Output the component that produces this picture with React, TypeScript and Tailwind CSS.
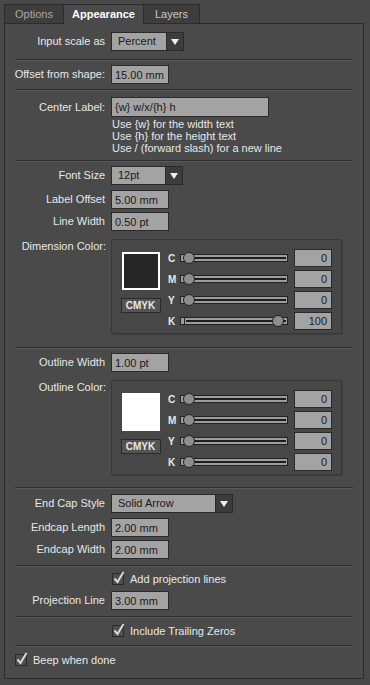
import React from "react";

const font = { fontFamily: '"Liberation Sans", Arial, sans-serif' };

function Sep({ mt }: { mt: string }) {
  return <div className={`${mt} mx-[10px] h-[2px] border-t border-[#2f2f2f] border-b border-b-[#5a5a5a]`} />;
}

function Label({ children }: { children: React.ReactNode }) {
  return (
    <div className="w-[101px] shrink-0 whitespace-nowrap pr-[1px] text-right text-[11px] leading-[13px] text-[#e8e8e8]">
      {children}
    </div>
  );
}

function Field({ value, w = "w-[58px]" }: { value: string; w?: string }) {
  return (
    <div className={`${w} h-[19px] whitespace-nowrap border border-[#2a2a2a] bg-[#a3a3a3] px-[3px] text-[11px] leading-[18px] text-[#1a1a1a]`}>
      {value}
    </div>
  );
}

function Select({ value, w }: { value: string; w: string }) {
  return (
    <div className={`${w} flex h-[19px] border border-[#2a2a2a]`}>
      <div className="flex-1 bg-[#a3a3a3] px-[6px] text-[11px] leading-[17px] text-[#1a1a1a]">{value}</div>
      <div className="flex w-[17px] items-center justify-center border-l border-[#2a2a2a] bg-[#3c3c3c]">
        <svg width="8" height="6" viewBox="0 0 8 6">
          <path d="M0 0 H8 L4 6 Z" fill="#f0f0f0" />
        </svg>
      </div>
    </div>
  );
}

function Row({ mt, label, children }: { mt: string; label: string; children: React.ReactNode }) {
  return (
    <div className={`${mt} flex items-center gap-[5px]`}>
      <Label>{label}</Label>
      {children}
    </div>
  );
}

function Slider({ pos }: { pos: number }) {
  return (
    <div className="relative h-[12px] w-[108px]">
      <div className="absolute left-0 top-[2px] h-[8px] w-[5px] border border-[#222] bg-[#9d9d9d]" />
      <div className="absolute left-[4px] right-0 top-[2px] flex h-[8px] items-center border border-[#222] bg-[#9d9d9d] px-[1px]">
        <div className="h-[2px] w-full bg-[#1e1e1e]" />
      </div>
      <div
        className="absolute top-[0px] h-[12px] w-[12px] rounded-full border border-[#222] bg-[#8e8e8e]"
        style={{ left: `${pos}px` }}
      />
    </div>
  );
}

function ColorBox({ dark, k }: { dark: boolean; k: number }) {
  const rows: [string, number][] = [
    ["C", 0],
    ["M", 0],
    ["Y", 0],
    ["K", k],
  ];
  return (
    <div className="mt-[8px] flex">
      <div className="w-[106px] shrink-0 pr-[5px] text-right">
        <div className="mt-[1px] text-[11px] leading-[13px] text-[#e8e8e8]">{dark ? "Dimension Color:" : "Outline Color:"}</div>
      </div>
      <div className="flex h-[95px] w-[231px] rounded-[2px] border border-[#383838] bg-[#474747] shadow-[1px_1px_0_#3e3e3e]">
        <div className="flex w-[56px] flex-col items-center pl-[1px] pt-[12px]">
          <div
            className={`h-[38px] w-[38px] ${dark ? "border-[2px] border-white bg-[#262626]" : "bg-white"}`}
          />
          <div className="mt-[8px] h-[15px] w-[40px] border border-[#2a2a2a] bg-[#545454] text-center text-[10px] font-bold leading-[13px] text-[#e8e8e8]">
            CMYK
          </div>
        </div>
        <div className="flex flex-col gap-[3px] pt-[9px]">
          {rows.map(([l, v]) => (
            <div key={l} className="flex h-[18px] items-center">
              <div className="w-[12px] text-[10px] font-bold text-[#e8e8e8]">{l}</div>
              <Slider pos={v === 100 ? 92 : 3} />
              <div className="ml-[6px] h-[18px] w-[38px] border border-[#2a2a2a] bg-[#a3a3a3] pr-[4px] text-right text-[11px] leading-[17px] text-[#1a1a1a]">
                {v}
              </div>
            </div>
          ))}
        </div>
      </div>
    </div>
  );
}

function Check({ label, mt, pl }: { label: string; mt: string; pl: string }) {
  return (
    <div className={`${mt} ${pl} flex h-[14px] items-center gap-[6px]`}>
      <div className="relative h-[12px] w-[12px] border border-[#2a2a2a] bg-[#4e4e4e]">
        <svg className="absolute left-[0px] top-[-3px]" width="12" height="13" viewBox="0 0 12 13">
          <path d="M1.5 7.5 L4.5 11 L10.5 1" stroke="#d8d8d8" strokeWidth="2" fill="none" />
        </svg>
      </div>
      <span className="text-[11px] leading-[13px] text-[#e8e8e8]">{label}</span>
    </div>
  );
}

export default function App() {
  return (
    <div style={font} className="h-[685px] w-[370px] bg-[#484848] px-[4px] pt-[4px]">
      <div className="flex h-[19px] text-[11px]">
        <div className="w-[60px] border border-b-0 border-[#2c2c2c] bg-[#3d3d3d] text-center leading-[18px] text-[#a8a8a8]">
          Options
        </div>
        <div className="relative z-10 h-[20px] w-[80px] border-t border-r border-[#2c2c2c] bg-[#4a4a4a] text-center font-bold leading-[18px] text-white">
          Appearance
        </div>
        <div className="w-[56px] border-t border-r border-[#2c2c2c] bg-[#3d3d3d] text-center leading-[18px] text-[#c8c8c8]">
          Layers
        </div>
      </div>
      <div className="h-[656px] w-[360px] border border-[#2c2c2c] bg-[#4a4a4a]">
        <Row mt="mt-[8px]" label="Input scale as">
          <Select value="Percent" w="w-[73px]" />
        </Row>
        <Sep mt="mt-[8px]" />
        <Row mt="mt-[4px]" label="Offset from shape:">
          <Field value="15.00 mm" />
        </Row>
        <Sep mt="mt-[5px]" />
        <Row mt="mt-[6px]" label="Center Label:">
          <Field value="{w} w/x/{h} h" w="w-[158px] h-[20px]" />
        </Row>
        <div className="mt-[1px] pl-[107px] text-[11px] leading-[12px] text-[#e8e8e8]">
          <div>Use {"{w}"} for the width text</div>
          <div>Use {"{h}"} for the height text</div>
          <div>Use / (forward slash) for a new line</div>
        </div>
        <Sep mt="mt-[6px]" />
        <Row mt="mt-[4px]" label="Font Size">
          <Select value="12pt" w="w-[72px]" />
        </Row>
        <Row mt="mt-[5px]" label="Label Offset">
          <Field value="5.00 mm" />
        </Row>
        <Row mt="mt-[3px]" label="Line Width">
          <Field value="0.50 pt" />
        </Row>
        <ColorBox dark k={100} />
        <Sep mt="mt-[13px]" />
        <Row mt="mt-[4px]" label="Outline Width">
          <Field value="1.00 pt" />
        </Row>
        <ColorBox dark={false} k={0} />
        <Sep mt="mt-[12px]" />
        <Row mt="mt-[5px]" label="End Cap Style">
          <Select value="Solid Arrow" w="w-[122px]" />
        </Row>
        <Row mt="mt-[5px]" label="Endcap Length">
          <Field value="2.00 mm" />
        </Row>
        <Row mt="mt-[3px]" label="Endcap Width">
          <Field value="2.00 mm" />
        </Row>
        <Sep mt="mt-[6px]" />
        <Check mt="mt-[5px]" pl="pl-[107px]" label="Add projection lines" />
        <Row mt="mt-[5px]" label="Projection Line">
          <Field value="3.00 mm" />
        </Row>
        <Sep mt="mt-[6px]" />
        <Check mt="mt-[6px]" pl="pl-[107px]" label="Include Trailing Zeros" />
        <Sep mt="mt-[7px]" />
        <Check mt="mt-[6px]" pl="pl-[10px]" label="Beep when done" />
      </div>
    </div>
  );
}
